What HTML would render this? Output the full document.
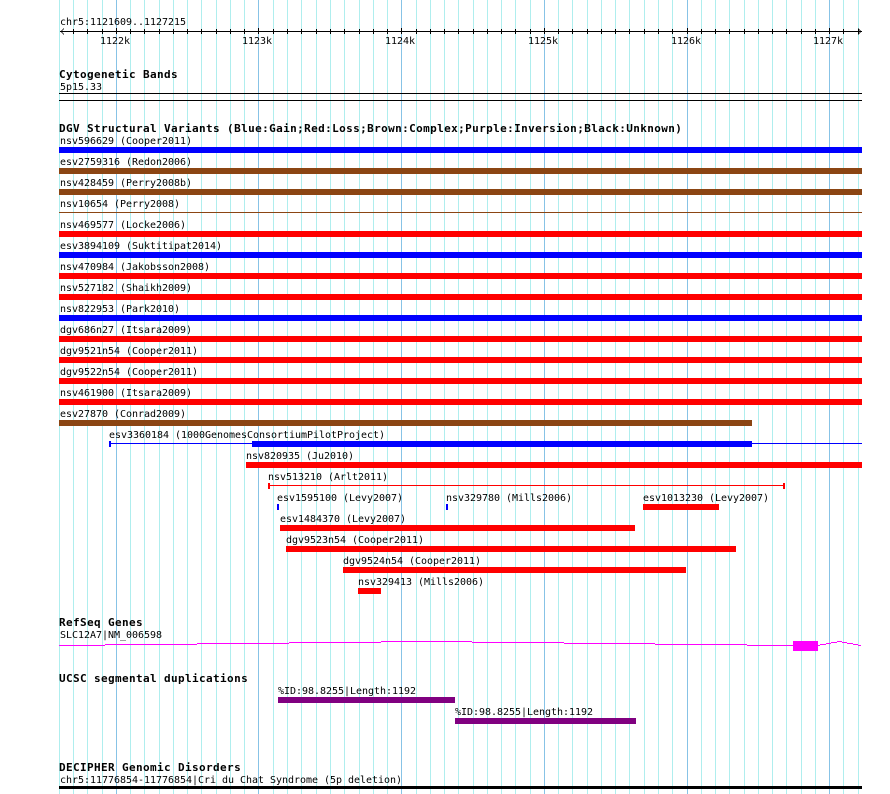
<!DOCTYPE html>
<html><head><meta charset="utf-8"><title>Genome view</title>
<style>
html,body{margin:0;padding:0;background:#fff}
svg{display:block}
text{font-family:"DejaVu Sans Mono","Liberation Mono",monospace;font-size:10px;letter-spacing:-.02px;fill:#000;white-space:pre}
text.b{font-weight:bold;font-size:11px;letter-spacing:.38px}
</style></head><body>
<svg width="890" height="794" viewBox="0 0 890 794" xmlns="http://www.w3.org/2000/svg" shape-rendering="crispEdges">
<path fill="none" stroke="#AFEEEE" stroke-width="1" d="M59.5 0V794M73.5 0V794M87.5 0V794M102.5 0V794M130.5 0V794M144.5 0V794M159.5 0V794M173.5 0V794M187.5 0V794M201.5 0V794M216.5 0V794M230.5 0V794M244.5 0V794M273.5 0V794M287.5 0V794M301.5 0V794M316.5 0V794M330.5 0V794M344.5 0V794M359.5 0V794M373.5 0V794M387.5 0V794M416.5 0V794M430.5 0V794M444.5 0V794M458.5 0V794M473.5 0V794M487.5 0V794M501.5 0V794M515.5 0V794M530.5 0V794M558.5 0V794M572.5 0V794M587.5 0V794M601.5 0V794M615.5 0V794M629.5 0V794M644.5 0V794M658.5 0V794M672.5 0V794M701.5 0V794M715.5 0V794M729.5 0V794M744.5 0V794M758.5 0V794M772.5 0V794M786.5 0V794M801.5 0V794M815.5 0V794M843.5 0V794M858.5 0V794"/>
<path fill="none" stroke="#87C3E6" stroke-width="1" d="M116.5 0V794M258.5 0V794M401.5 0V794M544.5 0V794M687.5 0V794M829.5 0V794"/>

<!-- axis -->
<rect x="60" y="31" width="802" height="1" fill="#000"/>
<path fill="none" stroke="#000" stroke-width="1" d="M73.5 29V34M87.5 29V34M102.5 29V34M116.5 28V34M130.5 29V34M144.5 29V34M159.5 29V34M173.5 29V34M187.5 29V34M201.5 29V34M216.5 29V34M230.5 29V34M244.5 29V34M258.5 28V34M273.5 29V34M287.5 29V34M301.5 29V34M316.5 29V34M330.5 29V34M344.5 29V34M359.5 29V34M373.5 29V34M387.5 29V34M401.5 28V34M416.5 29V34M430.5 29V34M444.5 29V34M458.5 29V34M473.5 29V34M487.5 29V34M501.5 29V34M515.5 29V34M530.5 29V34M544.5 28V34M558.5 29V34M572.5 29V34M587.5 29V34M601.5 29V34M615.5 29V34M629.5 29V34M644.5 29V34M658.5 29V34M672.5 29V34M687.5 28V34M701.5 29V34M715.5 29V34M729.5 29V34M744.5 29V34M758.5 29V34M772.5 29V34M786.5 29V34M801.5 29V34M815.5 29V34M829.5 28V34M843.5 29V34M858.5 29V34"/>
<path fill="none" stroke="#000" stroke-width="1" d="M61.5 30.5V32.5M62.5 29.5V30.5M62.5 32.5V33.5M63.5 28.5V29.5M63.5 33.5V34.5M860.5 30.5V32.5M859.5 29.5V30.5M859.5 32.5V33.5M858.5 28.5V29.5M858.5 33.5V34.5"/>
<text x="60" y="25">chr5:1121609..1127215</text>
<text x="100" y="44">1122k</text>
<text x="242" y="44">1123k</text>
<text x="385" y="44">1124k</text>
<text x="528" y="44">1125k</text>
<text x="671" y="44">1126k</text>
<text x="813" y="44">1127k</text>

<!-- cytoband -->
<text class="b" x="59" y="78">Cytogenetic Bands</text>
<text x="60" y="90">5p15.33</text>
<rect x="59" y="93" width="803" height="1" fill="#000"/>
<rect x="59" y="100" width="803" height="1" fill="#000"/>

<!-- DGV -->
<text class="b" x="59" y="132">DGV Structural Variants (Blue:Gain;Red:Loss;Brown:Complex;Purple:Inversion;Black:Unknown)</text>
<text x="60" y="144">nsv596629 (Cooper2011)</text>
<rect x="59" y="147" width="803" height="6" fill="#0000ff"/>
<text x="60" y="165">esv2759316 (Redon2006)</text>
<rect x="59" y="168" width="803" height="6" fill="#8B4513"/>
<text x="60" y="186">nsv428459 (Perry2008b)</text>
<rect x="59" y="189" width="803" height="6" fill="#8B4513"/>
<text x="60" y="207">nsv10654 (Perry2008)</text>
<rect x="59" y="212" width="803" height="1" fill="#8B4513"/>
<text x="60" y="228">nsv469577 (Locke2006)</text>
<rect x="59" y="231" width="803" height="6" fill="#ff0000"/>
<text x="60" y="249">esv3894109 (Suktitipat2014)</text>
<rect x="59" y="252" width="803" height="6" fill="#0000ff"/>
<text x="60" y="270">nsv470984 (Jakobsson2008)</text>
<rect x="59" y="273" width="803" height="6" fill="#ff0000"/>
<text x="60" y="291">nsv527182 (Shaikh2009)</text>
<rect x="59" y="294" width="803" height="6" fill="#ff0000"/>
<text x="60" y="312">nsv822953 (Park2010)</text>
<rect x="59" y="315" width="803" height="6" fill="#0000ff"/>
<text x="60" y="333">dgv686n27 (Itsara2009)</text>
<rect x="59" y="336" width="803" height="6" fill="#ff0000"/>
<text x="60" y="354">dgv9521n54 (Cooper2011)</text>
<rect x="59" y="357" width="803" height="6" fill="#ff0000"/>
<text x="60" y="375">dgv9522n54 (Cooper2011)</text>
<rect x="59" y="378" width="803" height="6" fill="#ff0000"/>
<text x="60" y="396">nsv461900 (Itsara2009)</text>
<rect x="59" y="399" width="803" height="6" fill="#ff0000"/>
<text x="60" y="417">esv27870 (Conrad2009)</text>
<rect x="59" y="420" width="693" height="6" fill="#8B4513"/>

<text x="109" y="438">esv3360184 (1000GenomesConsortiumPilotProject)</text>
<rect x="109" y="443" width="753" height="1" fill="#0000ff"/>
<rect x="109" y="441" width="2" height="6" fill="#0000ff"/>
<rect x="252" y="441" width="500" height="6" fill="#0000ff"/>

<text x="246" y="459">nsv820935 (Ju2010)</text>
<rect x="246" y="462" width="616" height="6" fill="#ff0000"/>

<text x="268" y="480">nsv513210 (Arlt2011)</text>
<rect x="268" y="485" width="516" height="1" fill="#ff0000"/>
<rect x="268" y="483" width="2" height="6" fill="#ff0000"/>
<rect x="783" y="483" width="2" height="6" fill="#ff0000"/>

<text x="277" y="501">esv1595100 (Levy2007)</text>
<rect x="277" y="504" width="2" height="6" fill="#0000ff"/>
<text x="446" y="501">nsv329780 (Mills2006)</text>
<rect x="446" y="504" width="2" height="6" fill="#0000ff"/>
<text x="643" y="501">esv1013230 (Levy2007)</text>
<rect x="643" y="504" width="76" height="6" fill="#ff0000"/>

<text x="280" y="522">esv1484370 (Levy2007)</text>
<rect x="280" y="525" width="355" height="6" fill="#ff0000"/>
<text x="286" y="543">dgv9523n54 (Cooper2011)</text>
<rect x="286" y="546" width="450" height="6" fill="#ff0000"/>
<text x="343" y="564">dgv9524n54 (Cooper2011)</text>
<rect x="343" y="567" width="343" height="6" fill="#ff0000"/>
<text x="358" y="585">nsv329413 (Mills2006)</text>
<rect x="358" y="588" width="23" height="6" fill="#ff0000"/>

<!-- RefSeq -->
<text class="b" x="59" y="626">RefSeq Genes</text>
<text x="60" y="638">SLC12A7|NM_006598</text>
<path fill="none" stroke="#ff00ff" stroke-width="1" d="M59 645.5H105M105 644.5H197M197 643.5H289M289 642.5H381M381 641.5H472M472 642.5H564M564 643.5H655M655 644.5H747M747 645.5H793M818 645.5H820M820 644.5H826M826 643.5H831M831 642.5H837M837 641.5H842M842 642.5H847M847 643.5H853M853 644.5H858M858 645.5H861"/>
<rect x="793" y="641" width="25" height="10" fill="#ff00ff"/>

<!-- UCSC -->
<text class="b" x="59" y="682">UCSC segmental duplications</text>
<text x="278" y="694">%ID:98.8255|Length:1192</text>
<rect x="278" y="697" width="177" height="6" fill="#800080"/>
<text x="455" y="715">%ID:98.8255|Length:1192</text>
<rect x="455" y="718" width="181" height="6" fill="#800080"/>

<!-- DECIPHER -->
<text class="b" x="59" y="771">DECIPHER Genomic Disorders</text>
<text x="60" y="783">chr5:11776854-11776854|Cri du Chat Syndrome (5p deletion)</text>
<rect x="59" y="786" width="803" height="3" fill="#000"/>
</svg>
</body></html>
